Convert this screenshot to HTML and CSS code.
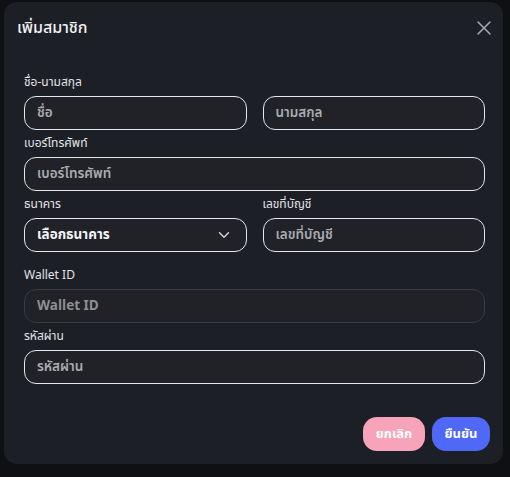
FILE: index.html
```html
<!DOCTYPE html>
<html lang="th">
<head>
<meta charset="utf-8">
<link rel="stylesheet" href="styles.css">
</head>
<body>
<div class="modal">
  <div class="header">
    <div class="title">เพิ่มสมาชิก</div>
    <svg class="close" width="16" height="16" viewBox="0 0 16 16"><path d="M2 2 L14 14 M14 2 L2 14" stroke="#a4a6ab" stroke-width="1.6" stroke-linecap="round"/></svg>
  </div>
  <div class="body">
    <div class="field">
      <div class="label">ชื่อ-นามสกุล</div>
      <div class="row">
        <div class="input"><span class="ph">ชื่อ</span></div>
        <div class="input"><span class="ph">นามสกุล</span></div>
      </div>
    </div>
    <div class="field">
      <div class="label">เบอร์โทรศัพท์</div>
      <div class="input"><span class="ph">เบอร์โทรศัพท์</span></div>
    </div>
    <div class="row bankrow">
      <div class="field">
        <div class="label">ธนาคาร</div>
        <div class="input select"><span class="val">เลือกธนาคาร</span>
          <svg width="12" height="8" viewBox="0 0 12 8"><path d="M1.5 1.8 L6 6.2 L10.5 1.8" fill="none" stroke="#d0d2d6" stroke-width="1.5" stroke-linecap="round" stroke-linejoin="round"/></svg>
        </div>
      </div>
      <div class="field">
        <div class="label">เลขที่บัญชี</div>
        <div class="input"><span class="ph">เลขที่บัญชี</span></div>
      </div>
    </div>
    <div class="field">
      <div class="label">Wallet ID</div>
      <div class="input disabled"><span class="ph latin">Wallet ID</span></div>
    </div>
    <div class="field">
      <div class="label">รหัสผ่าน</div>
      <div class="input"><span class="ph">รหัสผ่าน</span></div>
    </div>
  </div>
  <div class="footer">
    <button class="btn cancel">ยกเลิก</button>
    <button class="btn ok">ยืนยัน</button>
  </div>
</div>
</body>
</html>
```
FILE: styles.css
```css
html, body {
  margin: 0;
  padding: 0;
}
body {
  width: 510px;
  height: 477px;
  background: #0f1014;
  font-family: "Noto Sans Thai", "Noto Sans Thai UI", "Noto Sans", "Liberation Sans", sans-serif;
  color: #e8e8ea;
  overflow: hidden;
  box-sizing: border-box;
  padding: 2px 7px 0 4px;
}
.modal {
  width: 499px;
  height: 462px;
  background: #1d1f26;
  border-radius: 13px;
  box-sizing: border-box;
  display: flex;
  flex-direction: column;
}
.header {
  height: 52px;
  display: flex;
  align-items: center;
  justify-content: space-between;
  padding: 0 11px 0 13px;
}
.title {
  font-size: 16px;
  font-weight: 500;
  color: #f2f2f4;
}
.close {
  display: block;
}
.body {
  padding: 20px 18px 0 20px;
  display: flex;
  flex-direction: column;
  gap: 5px;
}
.field {
  display: flex;
  flex-direction: column;
  gap: 6px;
}
.row > .field {
  flex: 1;
}
.label {
  font-size: 12px;
  line-height: 16px;
  color: #e2e3e6;
}
.row {
  display: flex;
  gap: 16px;
}
.bankrow {
  margin-bottom: 10px;
}
.input {
  height: 34px;
  flex: none;
  box-sizing: border-box;
  border: 1.5px solid #e6e7ea;
  border-radius: 12px;
  background: #202228;
  display: flex;
  align-items: center;
  padding: 0 12px;
}
.row > .input {
  flex: 1;
}
.ph {
  font-size: 13.5px;
  font-weight: 600;
  color: #a9abb0;
}
.select {
  justify-content: space-between;
  padding-right: 16px;
}
.val {
  font-size: 13.5px;
  font-weight: 700;
  color: #f4f4f6;
}
.disabled {
  border: 1px solid #383b43;
  background: #202228;
}
.disabled .ph {
  color: #8d8f94;
  font-weight: 700;
}
.footer {
  margin-top: auto;
  display: flex;
  justify-content: flex-end;
  gap: 7px;
  padding: 0 13px 13px 0;
}
.btn {
  height: 34px;
  border: none;
  border-radius: 14px;
  font-family: inherit;
  font-size: 13px;
  font-weight: 700;
  color: #fff;
  padding: 0;
}
.cancel {
  width: 62px;
  background: #f7a3ba;
}
.ok {
  width: 58px;
  background: #4f68f5;
}
```
